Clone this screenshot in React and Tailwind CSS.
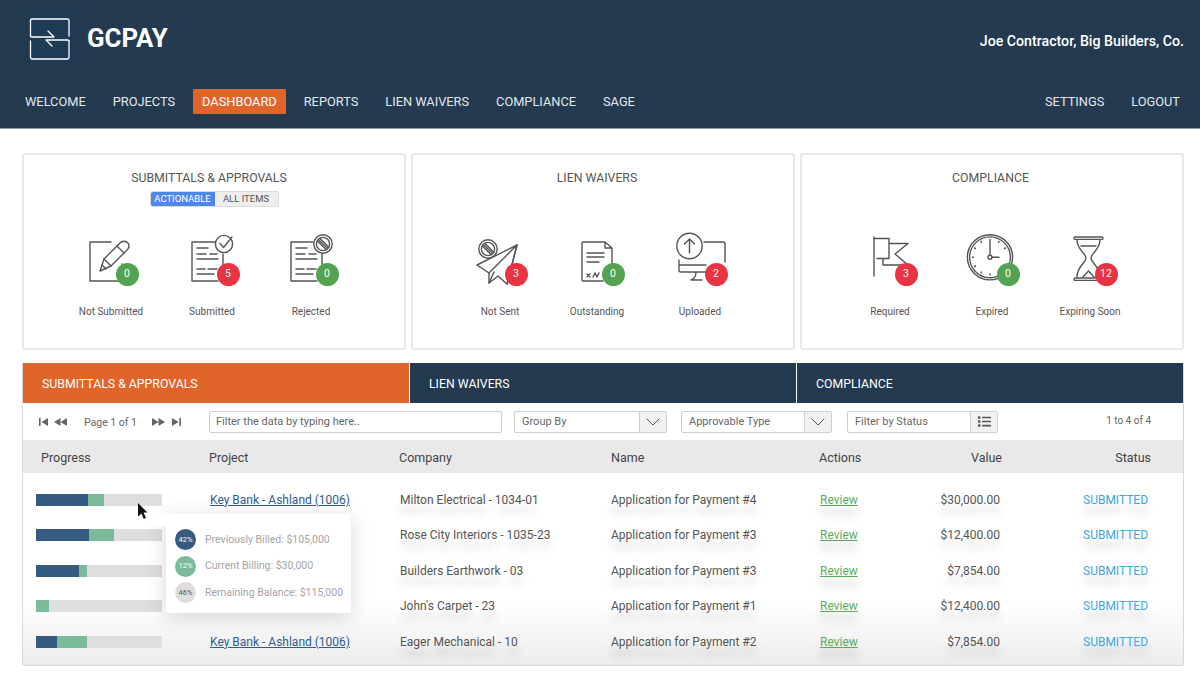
import React from "react";
import { ChevronDown } from "lucide-react";
import { FaList } from "react-icons/fa";

const navLeft = ["WELCOME", "PROJECTS", "DASHBOARD", "REPORTS", "LIEN WAIVERS", "COMPLIANCE", "SAGE"];

// project is left out on the rows where the tooltip sits over that cell
const rows = [
  { navy: 52, green: 16, project: "Key Bank - Ashland (1006)", company: "Milton Electrical - 1034-01", name: "Application for Payment #4", value: "$30,000.00" },
  { navy: 53, green: 25, project: "", company: "Rose City Interiors - 1035-23", name: "Application for Payment #3", value: "$12,400.00" },
  { navy: 43, green: 8, project: "", company: "Builders Earthwork - 03", name: "Application for Payment #3", value: "$7,854.00" },
  { navy: 0, green: 13, project: "", company: "John's Carpet - 23", name: "Application for Payment #1", value: "$12,400.00" },
  { navy: 21, green: 30, project: "Key Bank - Ashland (1006)", company: "Eager Mechanical - 10", name: "Application for Payment #2", value: "$7,854.00" },
];

function Svg({ children }) {
  return (
    <svg width="80" height="60" viewBox="0 0 80 60" fill="none" stroke="#555" strokeWidth="1.4" strokeLinecap="round" strokeLinejoin="round">
      {children}
    </svg>
  );
}

// no-entry sign used on two of the icons
function Prohibit({ x, y }) {
  return (
    <g>
      <circle cx={x} cy={y} r="9.2" />
      <circle cx={x} cy={y} r="6.6" />
      <path d={`M${x - 4.6} ${y - 4.6} L${x + 4.6} ${y + 4.6} M${x - 3} ${y - 5.6} L${x + 5.6} ${y + 3} M${x - 5.6} ${y - 3} L${x + 3} ${y + 5.6}`} />
    </g>
  );
}

function DocLines() {
  return <path d="M25 18h11M25 24h9M38 24h7M25 29h21M25 39h8M36 39h9M25 44h17" />;
}

const icons = {
  pen: (
    <Svg>
      <path d="M40 12H19V51H51V34" />
      <path d="M29 41L33 29L50 12Q54 10 57 13Q59 16 57 19L40 36Z" />
      <path d="M33 29L40 36M46 16L53 23M31 35L35 39" />
    </Svg>
  ),
  check: (
    <Svg>
      <path d="M43 12H20V51H46M51 24V35" />
      <DocLines />
      <circle cx="52" cy="14" r="8.6" />
      <path d="M48 13.5L51.5 17.5L60 7" />
    </Svg>
  ),
  doc: (
    <Svg>
      <path d="M42 12H20V51H46M51 24V35" />
      <DocLines />
      <Prohibit x={52} y={14} />
    </Svg>
  ),
  plane: (
    <Svg>
      <path d="M57 15L17 35L29 43L29 53L38 46L47 54Z" />
      <path d="M57 15L29 43M57 15L47 54M29 53L34 42" />
      <Prohibit x={28} y={19} />
    </Svg>
  ),
  sheet: (
    <Svg>
      <path d="M48 12H26Q25 12 25 13V50Q25 51 26 51H46M48 12L55 18V35M48 12V18H55" />
      <path d="M30 23H47M30 27H47M30 32H42" />
      <path d="M30 44L33 47M33 44L30 47M36 47L38 43L40 47L42 43" />
    </Svg>
  ),
  monitor: (
    <Svg>
      <path d="M44 12H63Q65 12 65 14V32M19 30V40Q19 42 21 42H47M19 35H46M36 42Q36 48 31 50H42" />
      <circle cx="29.5" cy="16" r="12.7" />
      <path d="M29.5 23V9.5M24.5 14L29.5 9L34.5 14" />
    </Svg>
  ),
  flag: (
    <Svg>
      <path d="M24 7V46" />
      <path d="M24 8.5H39V28.5H27M39 13.5H58L45 24L58 35H33V28.5" />
    </Svg>
  ),
  clock: (
    <Svg>
      <circle cx="38" cy="27.3" r="22.6" />
      <circle cx="38" cy="27.3" r="20.4" />
      <path d="M38 25V11M40 27.3H47" />
      <circle cx="38" cy="27.3" r="2" />
      <path d="M38 9.5V10.5M47 11.5L46.5 12.5M53.5 18L52.5 18.5M29 11.5L29.5 12.5M22.5 18L23.5 18.5M20.5 27.3H21.5M22.5 36.5L23.5 36M29 43L29.5 42M38 45V44M47 43L46.5 42" />
    </Svg>
  ),
  hourglass: (
    <Svg>
      <rect x="24" y="7" width="29" height="2.4" rx="1.2" />
      <rect x="24" y="48" width="29" height="2.4" rx="1.2" />
      <path d="M27 10C27 20 36 23 36 28C36 33 27 36 27 47M50 10C50 20 41 23 41 28C41 33 50 36 50 47" />
      <path d="M31 16H46M33 47L38.5 41L44 47" />
    </Svg>
  ),
};

const cards = [
  {
    title: "SUBMITTALS & APPROVALS",
    toggle: true,
    pad: "pl-[37px]",
    titlePad: "pr-[10px]",
    items: [
      { icon: "pen", n: 0, red: false, label: "Not Submitted", w: "w-[100px]" },
      { icon: "check", n: 5, red: true, label: "Submitted", w: "w-[102px]" },
      { icon: "doc", n: 0, red: false, label: "Rejected", w: "w-[96px]" },
    ],
  },
  {
    title: "LIEN WAIVERS",
    pad: "pl-[37px]",
    titlePad: "pr-[12px]",
    items: [
      { icon: "plane", n: 3, red: true, label: "Not Sent", w: "w-[100px]" },
      { icon: "sheet", n: 0, red: false, label: "Outstanding", w: "w-[94px]" },
      { icon: "monitor", n: 2, red: true, label: "Uploaded", w: "w-[112px]" },
    ],
  },
  {
    title: "COMPLIANCE",
    pad: "pl-[38px]",
    titlePad: "pr-[3px]",
    items: [
      { icon: "flag", n: 3, red: true, label: "Required", w: "w-[100px]" },
      { icon: "clock", n: 0, red: false, label: "Expired", w: "w-[104px]" },
      { icon: "hourglass", n: 12, red: true, label: "Expiring Soon", w: "w-[92px]" },
    ],
  },
];

function Logo() {
  return (
    <svg width="50" height="50" viewBox="0 0 50 50" fill="none" stroke="#fff" strokeWidth="1.3" strokeLinecap="round" strokeLinejoin="round" className="bg-[#1f3a54]">
      <path d="M5.5 22V6.5Q5.5 5 7 5H42.5Q44 5 44 6.5V22" />
      <path d="M5.5 22Q5.5 23 7 23H29L23 17" />
      <path d="M44 27Q44 26 42.5 26H21L27 32" />
      <path d="M5.5 27V43Q5.5 45 7 45H42.5Q44 45 44 43V27" />
    </svg>
  );
}

function Select({ label, w, btn }) {
  return (
    <div className={`flex h-[22px] items-stretch rounded-[2px] border border-[#cfcfcf] ${w}`}>
      <div className="flex-1 pl-[7px] text-[11px] leading-[20px] text-[#666]">{label}</div>
      <div className="flex w-[27px] items-center justify-center border-l border-[#cfcfcf] bg-[#f1f1f1] text-[#555]">
        {btn}
      </div>
    </div>
  );
}

function Pager({ flip, end }) {
  return (
    <svg width={end ? 9 : 13} height="8" viewBox={end ? "0 0 9 8" : "0 0 13 8"} fill="#666" className={flip ? "rotate-180" : ""}>
      {end ? <path d="M0 0h1.6v8H0zM9 0v8L2.5 4z" /> : <path d="M6.5 0v8L0 4zM13 0v8L6.5 4z" />}
    </svg>
  );
}

export default function App() {
  const shadow = "[text-shadow:0_10px_10px_rgba(0,0,0,0.2)]";
  return (
    <div className="h-[674px] w-[1200px] overflow-hidden bg-white [font-family:Roboto,sans-serif]">
      {/* header */}
      <header className="h-[129px] border-b border-[#8b99a6] bg-[#243a50]">
        <div className="flex h-[77px] items-center pl-[25px] pr-[16px]">
          <Logo />
          <span className="ml-[12px] text-[25.8px] font-bold leading-none text-white">GCPAY</span>
          <span className="ml-auto mt-[7px] text-[14.2px] font-medium text-white">Joe Contractor, Big Builders, Co.</span>
        </div>
        <nav className="mt-[12px] flex items-center gap-[9px] px-[16px] text-[12.8px] text-[#e3e8ec]">
          {navLeft.map((n) => (
            <a key={n} className={`flex h-[25px] items-center rounded-[1px] px-[9px] ${n === "DASHBOARD" ? "bg-[#e0652a] text-white" : ""}`}>
              {n}
            </a>
          ))}
          <a className="ml-auto flex h-[25px] items-center px-[9px]">SETTINGS</a>
          <a className="mr-[-5px] flex h-[25px] items-center px-[9px]">LOGOUT</a>
        </nav>
      </header>

      {/* summary cards */}
      <div className="flex gap-[5px] pl-[22px] pt-[24px]">
        {cards.map((c) => (
          <section key={c.title} className="h-[197px] w-[384px] shrink-0 rounded-[3px] border-2 border-[#e8e8e8] pt-[14.5px]">
            <h3 className={`text-center text-[12.3px] leading-[16px] text-[#555] ${c.titlePad}`}>{c.title}</h3>
            <div className="mb-[23px] mt-[5.5px] flex h-[16px] justify-center text-[9.5px] leading-[14px]">
              {c.toggle && (
                <div className="flex rounded-[2px] border border-[#dcdcdc]">
                  <span className="w-[64px] rounded-l-[2px] bg-[#4f86e8] text-center text-white">ACTIONABLE</span>
                  <span className="w-[63px] bg-[#eeeeee] text-center text-[#555]">ALL ITEMS</span>
                </div>
              )}
            </div>
            <div className={`flex ${c.pad}`}>
              {c.items.map((it) => (
                <div key={it.label} className={`flex flex-col items-center ${it.w}`}>
                  <div className="relative h-[60px] w-[80px]">
                    {icons[it.icon]}
                    <span className={`absolute left-[44.5px] top-[32.5px] flex h-[23px] w-[23px] items-center justify-center rounded-full text-[10.5px] text-white ${it.red ? "bg-[#ea3342]" : "bg-[#53a351]"}`}>
                      {it.n}
                    </span>
                  </div>
                  <span className="mt-[15px] whitespace-nowrap text-[10px] leading-[14px] text-[#555]">{it.label}</span>
                </div>
              ))}
            </div>
          </section>
        ))}
      </div>

      {/* table panel */}
      <div className="ml-[22px] mt-[13px] h-[303px] w-[1162px] rounded-b-[3px] border-x border-b border-[#d8d8d8] bg-gradient-to-b from-white from-[80%] to-[#ececec]">
        <div className="flex h-[40px] gap-[1px] text-[12.3px] leading-[42px] text-white">
          <div className="w-[386px] bg-[#e0652a] pl-[19px]">SUBMITTALS &amp; APPROVALS</div>
          <div className="w-[386px] bg-[#243a50] pl-[19px]">LIEN WAIVERS</div>
          <div className="flex-1 bg-[#243a50] pl-[19px]">COMPLIANCE</div>
        </div>

        {/* toolbar */}
        <div className="flex h-[37px] items-center bg-white pl-[16px] text-[10.5px] text-[#666]">
          <div className="flex w-[170px] items-center">
            <Pager end />
            <span className="ml-[6px]"><Pager /></span>
            <span className="ml-[17px] mt-[2px] w-[68px]">Page 1 of 1</span>
            <Pager flip />
            <span className="ml-[7px]"><Pager flip end /></span>
          </div>
          <div className="h-[22px] w-[293px] rounded-[2px] border border-[#cfcfcf] pl-[6px] text-[11px] leading-[20px]">Filter the data by typing here..</div>
          <div className="ml-[12px]"><Select label="Group By" w="w-[153px]" btn={<ChevronDown size={24} strokeWidth={1} />} /></div>
          <div className="ml-[14px]"><Select label="Approvable Type" w="w-[151px]" btn={<ChevronDown size={24} strokeWidth={1} />} /></div>
          <div className="ml-[15px]"><Select label="Filter by Status" w="w-[151px]" btn={<FaList size={13} />} /></div>
          <span className="mb-[3px] ml-auto mr-[32px] text-[10px]">1 to 4 of 4</span>
        </div>

        {/* column heads */}
        <div className="grid h-[33px] grid-cols-[186px_190px_212px_208px_80px_103px_1fr] items-center bg-[#e9e9e9] pt-[3px] text-[12.5px] text-[#444]">
          <span className="pl-[18px]">Progress</span>
          <span>Project</span>
          <span>Company</span>
          <span>Name</span>
          <span>Actions</span>
          <span className="text-right">Value</span>
          <span className="pr-[32px] text-right">Status</span>
        </div>

        {/* rows */}
        <div className="relative pt-[9px]">
          {rows.map((r, i) => (
            <div key={i} className="grid h-[35.5px] grid-cols-[186px_190px_212px_208px_80px_101px_1fr] items-center text-[12px] text-[#555]">
              <div className="ml-[13px] flex h-[12px] w-[126px] bg-[#dedede]">
                <div className="bg-[#355b80]" style={{ width: `${(r.navy / 126) * 100}%` }} />
                <div className="bg-[#7abb9a]" style={{ width: `${(r.green / 126) * 100}%` }} />
              </div>
              <a className="pl-[1px] text-[12px] text-[#2f5c97] underline">{r.project}</a>
              <span className={`pl-[1px] ${shadow}`}>{r.company}</span>
              <span className={shadow}>{r.name}</span>
              <a className={`pl-[1px] text-[#5cab5c] underline ${shadow}`}>Review</a>
              <span className={`text-right ${shadow}`}>{r.value}</span>
              <span className={`pl-[83px] text-[#3aa9e0] ${shadow}`}>SUBMITTED</span>
            </div>
          ))}

          {/* hover tooltip */}
          <div className="absolute left-[143px] top-[41px] h-[99px] w-[185px] bg-white shadow-[0_4px_20px_rgba(0,0,0,0.16)]">
            <div className="absolute left-[-20px] top-[-1px] h-0 w-0 border-r-[20px] border-t-[13px] border-r-white border-t-transparent" />
            <div className="flex h-full flex-col justify-center gap-[5.5px] pl-[9px] pt-[5px] text-[10.5px] text-[#a5a5a5]">
              {[
                ["42%", "bg-[#355b80] text-white", "Previously Billed: $105,000"],
                ["12%", "bg-[#7abb9a] text-white", "Current Billing: $30,000"],
                ["46%", "bg-[#dedede] text-[#555]", "Remaining Balance: $115,000"],
              ].map(([pct, cls, text]) => (
                <div key={pct} className="flex items-center gap-[9px]">
                  <span className={`flex h-[21px] w-[21px] shrink-0 items-center justify-center rounded-full text-[7.5px] ${cls}`}>{pct}</span>
                  <span className="whitespace-nowrap">{text}</span>
                </div>
              ))}
            </div>
          </div>

          {/* mouse pointer */}
          <svg className="absolute left-[115px] top-[30px]" width="10" height="17" viewBox="0 0 10 17" fill="#111">
            <path d="M0 0L9.5 9.5H5.6L8 15L5.8 16L3.4 10.4L0 13.5Z" />
          </svg>
        </div>
      </div>
    </div>
  );
}
